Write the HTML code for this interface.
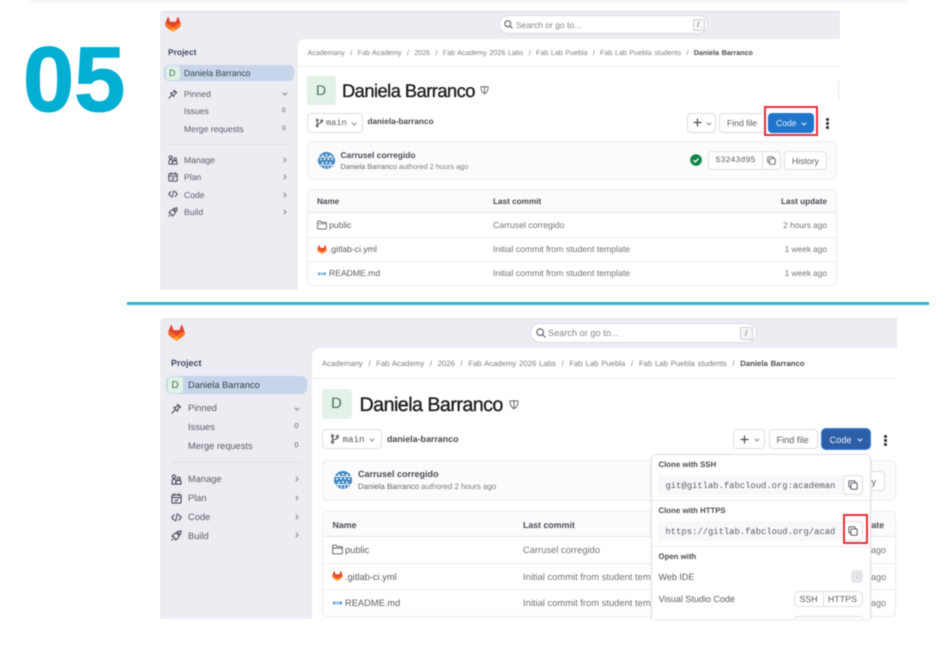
<!DOCTYPE html>
<html><head><meta charset="utf-8"><style>
html,body{margin:0;padding:0;background:#fff}
body{width:942px;height:653px;overflow:hidden;position:relative;font-family:"Liberation Sans",sans-serif;text-rendering:geometricPrecision}
.a{position:absolute;box-sizing:border-box}
.t{position:absolute;line-height:0;white-space:nowrap;color:#5c5c65}
.b{font-weight:bold;color:#4a4a52}
.m{font-family:"Liberation Mono",monospace}
svg.i{position:absolute;overflow:visible;fill:none;stroke:#4a4a54;stroke-width:1.2;stroke-linecap:round;stroke-linejoin:round}
svg.c{stroke:#85858e;stroke-width:.9}
.wrap{position:absolute;left:0;top:0;width:942px;height:653px;filter:blur(.42px)}
.btn{position:absolute;box-sizing:border-box;background:#fff;border:1px solid #dfdfe3;border-radius:4px}
</style></head><body>
<svg width="0" height="0" style="position:absolute">
<defs>
<symbol id="tan" viewBox="0 0 25 24"><path fill="#e24329" d="M24.5 9.5 21.1.6a.88.88 0 0 0-1.67.1l-2.27 6.96H7.85L5.58.7A.88.88 0 0 0 3.9.6L.53 9.4a6.25 6.25 0 0 0 2.07 7.22l5 3.75 4.3 3.02a1 1 0 0 0 1.2 0l4.3-3.02 5.04-3.77A6.25 6.25 0 0 0 24.5 9.5z"/><path fill="#fc6d26" d="M24.5 9.5c-2.6.5-5 1.6-7 3.2l-5 3.8 4.9 3.9 5-3.8a6.25 6.25 0 0 0 2.1-7.1z"/><path fill="#fc6d26" d="M.5 9.5c2.6.5 5 1.6 7 3.2l5 3.8-4.9 3.9-5-3.8A6.25 6.25 0 0 1 .5 9.5z"/><path fill="#fca326" d="M7.6 20.4l4.3 3.2a1 1 0 0 0 1.2 0l4.3-3.2-4.9-3.9z"/></symbol>
<symbol id="copy" viewBox="0 0 12 12"><path d="M3 8.500H2a1 1 0 0 1-1-1V2a1 1 0 0 1 1-1h5.500a1 1 0 0 1 1 1v1"/><rect x="3.500" y="3.500" width="7.500" height="7.500" rx="1"/></symbol>
<symbol id="pin" viewBox="0 0 12 12"><path d="M1 11l3.500-3.500M3 5l4 4 .6-2.600L10 4 8 2 5.600 4.400z"/><path d="M7 1.500l3.500 3.500"/></symbol>
<symbol id="manage" viewBox="0 0 12 12"><circle cx="3.200" cy="2.800" r="1.800"/><circle cx="8.500" cy="5" r="1.600"/><path d="M1.200 11V7.500a2 2 0 0 1 2-2 2 2 0 0 1 2 2V11zM5.500 11V8.500a1.500 1.500 0 0 1 1.500-1.300h2.500A1.500 1.500 0 0 1 11 8.700V11z"/></symbol>
<symbol id="plan" viewBox="0 0 12 12"><rect x="1" y="2" width="10" height="9" rx="1"/><path d="M1 5h10M3.500 .8v2.200M8.500 .8v2.200M4.500 8l1 1 2-2"/></symbol>
<symbol id="code" viewBox="0 0 12 12"><path d="M3.500 3L.8 6l2.700 3M8.500 3l2.700 3-2.700 3M7 2L5 10"/></symbol>
<symbol id="build" viewBox="0 0 12 12"><path d="M11 1c-3 0-5 1-6.500 3L3 4.500 1 7l2 .5L4.500 9l.5 2 2.500-2L8 7.500C10 6 11 4 11 1z"/><circle cx="7.800" cy="4.200" r="1"/><path d="M1 11l1.500-1.500"/></symbol>
<symbol id="branch" viewBox="0 0 12 12"><circle cx="3" cy="2.200" r="1.300"/><circle cx="3" cy="9.800" r="1.300"/><circle cx="9" cy="3" r="1.300"/><path d="M3 3.500v5M9 4.300c0 2.200-3 2-6 3"/></symbol>
<symbol id="folder" viewBox="0 0 12 12"><path d="M.7 3V2a.7.7 0 0 1 .7-.7h3l1.200 1.500h5a.7.7 0 0 1 .7.700V10a.7.7 0 0 1-.7.700H1.400A.7.700 0 0 1 .7 10zM.7 4.500h10.600"/></symbol>
<symbol id="shield" viewBox="0 0 10 10"><path d="M1 1.500C3.500 1.200 6.500 1.200 9 1.500 9.300 5 7.500 8 5 9.300 2.500 8 .7 5 1 1.500zM5 1.300v8"/></symbol>
<symbol id="search" viewBox="0 0 12 12"><circle cx="5" cy="5" r="4"/><path d="M8 8l3 3"/></symbol>
<symbol id="avatar" viewBox="0 0 20 20"><circle cx="10" cy="10" r="9" fill="#3f86c0"/><g fill="#fff"><circle cx="6" cy="5" r="1"/><circle cx="10" cy="4" r="1"/><circle cx="14" cy="5" r="1"/><circle cx="4" cy="9" r="1"/><circle cx="8" cy="8.500" r="1"/><circle cx="12" cy="8.500" r="1"/><circle cx="16" cy="9" r="1"/><circle cx="6" cy="12.500" r="1"/><circle cx="10" cy="12" r="1"/><circle cx="14" cy="12.500" r="1"/></g><path d="M0 6.500h20M0 14.500h20M5 15v5M8.300 15v5M11.700 15v5M15 15v5" stroke="#fff" stroke-width=".9"/></symbol>
<symbol id="md" viewBox="0 0 9 4"><path d="M0 .5h2.500v3H0zM3.500 .5h1.500v3H3.500zM6 .5h3v3H6z" fill="#5aa0e0"/></symbol>
</defs></svg>

<div class="wrap">
<div class="a" style="left:30px;top:0;width:880px;height:4px;background:linear-gradient(#f4f4f6,#fff)"></div>

<div class="t" style="left:23px;top:79.500px;font-size:92px;font-weight:bold;color:#02aed2;-webkit-text-stroke:1.200px #02aed2">05</div>
<div class="a" style="left:127px;top:302px;width:802px;height:3px;background:#2bb3cd"></div>

<!-- PANEL 1 -->
<div class="a" style="left:160px;top:11px;width:680px;height:279px;background:#ececf3;border-top:1px solid #dcdce4;border-radius:3px 0 0 0"></div>
<div class="a" style="left:298px;top:39px;width:542px;height:251px;background:#fff;border-radius:7px 0 0 0"></div>
<svg class="a" style="left:165px;top:17px" width="16" height="15"><use href="#tan"/></svg>
<div class="a" style="left:499px;top:15px;width:209px;height:19px;background:#fff;border:1px solid #dcdce2;border-radius:9px"></div>
<svg class="i" style="left:504px;top:20px" width="9" height="9"><use href="#search"/></svg>
<div class="t" style="left:516px;top:25px;font-size:8.500px;color:#85858d">Search or go to...</div>
<div class="a" style="left:693px;top:19px;width:12px;height:12px;border:1px solid #d0d0d6;border-radius:2px;background:#f6f6f8"></div>
<div class="t" style="left:697px;top:25px;font-size:8px;color:#666">/</div>

<div class="t b" style="left:168px;top:51.500px;font-size:8.400px;color:#3d4a60">Project</div>
<div class="a" style="left:164px;top:65px;width:130px;height:16px;background:#c6d5e9;border-radius:5px"></div>
<div class="a" style="left:166px;top:66px;width:14px;height:14px;background:#e0f2e4;border-radius:3px"></div>
<div class="t" style="left:169px;top:73px;font-size:9px;color:#3e6a50">D</div>
<div class="t" style="left:184px;top:73px;font-size:8.600px;color:#34404f">Daniela Barranco</div>

<svg class="i" style="left:168px;top:89px" width="10" height="10"><use href="#pin"/></svg>
<div class="t" style="left:184px;top:94px;font-size:8.600px">Pinned</div>
<svg class="i c" style="left:282px;top:92px" width="6" height="4"><path d="M1 1l2 2 2-2"/></svg>
<div class="t" style="left:184px;top:111px;font-size:8.600px">Issues</div>
<div class="t" style="left:282px;top:111px;font-size:6.500px">0</div>
<div class="t" style="left:184px;top:129px;font-size:8.600px">Merge requests</div>
<div class="t" style="left:282px;top:129px;font-size:6.500px">0</div>
<div class="a" style="left:168px;top:144px;width:121px;height:1px;background:#dcdce6"></div>
<svg class="i" style="left:168px;top:155px" width="10" height="10"><use href="#manage"/></svg>
<div class="t" style="left:184px;top:159.500px;font-size:8.600px">Manage</div>
<svg class="i" style="left:168px;top:172px" width="10" height="10"><use href="#plan"/></svg>
<div class="t" style="left:184px;top:177px;font-size:8.600px">Plan</div>
<svg class="i" style="left:168px;top:189px" width="10" height="10"><use href="#code"/></svg>
<div class="t" style="left:184px;top:194.500px;font-size:8.600px">Code</div>
<svg class="i" style="left:168px;top:207px" width="10" height="10"><use href="#build"/></svg>
<div class="t" style="left:184px;top:211.500px;font-size:8.600px">Build</div>
<svg class="i c" style="left:283px;top:157px" width="4" height="6"><path d="M1 1l2 2-2 2"/></svg>
<svg class="i c" style="left:283px;top:174px" width="4" height="6"><path d="M1 1l2 2-2 2"/></svg>
<svg class="i c" style="left:283px;top:192px" width="4" height="6"><path d="M1 1l2 2-2 2"/></svg>
<svg class="i c" style="left:283px;top:209px" width="4" height="6"><path d="M1 1l2 2-2 2"/></svg>

<div class="t" style="left:307.500px;top:53px;font-size:7.100px;color:#7c7c84;word-spacing:.7px">Academany&nbsp; /&nbsp; Fab Academy&nbsp; /&nbsp; 2026&nbsp; /&nbsp; Fab Academy 2026 Labs&nbsp; /&nbsp; Fab Lab Puebla&nbsp; /&nbsp; Fab Lab Puebla students&nbsp; /&nbsp; <b style="color:#4a4a52">Daniela Barranco</b></div>
<div class="a" style="left:298px;top:66px;width:542px;height:1px;background:#ececef"></div>
<div class="a" style="left:307px;top:76px;width:29px;height:29px;background:#e2f2e7;border-radius:3px"></div>
<div class="t" style="left:316px;top:90px;font-size:14px;color:#4a6e58">D</div>
<div class="t" style="left:342px;top:90.500px;font-size:18.300px;letter-spacing:-.52px;color:#1c1c20;-webkit-text-stroke:.35px #1c1c20">Daniela Barranco</div>
<svg class="i" style="left:480px;top:85px;stroke:#66666e;stroke-width:1" width="9" height="10"><use href="#shield"/></svg>
<div class="a" style="left:838px;top:82px;width:2px;height:16px;border:1px solid #e4e4e8;border-right:0"></div>

<div class="btn" style="left:307px;top:113px;width:56px;height:20px"></div>
<svg class="i" style="left:315px;top:118px" width="9" height="10"><use href="#branch"/></svg>
<div class="t m" style="left:326px;top:123px;font-size:8.600px;color:#5c5c65">main</div>
<svg class="i c" style="left:351px;top:122px" width="6" height="4"><path d="M1 1l2 2 2-2"/></svg>
<div class="t b" style="left:367.500px;top:122px;font-size:8.200px">daniela-barranco</div>

<div class="btn" style="left:687px;top:113px;width:29px;height:20px"></div>
<svg class="i" style="left:693px;top:118px" width="9" height="9"><path d="M4.500 1v7M1 4.500h7"/></svg>
<svg class="i c" style="left:706px;top:122px" width="6" height="4"><path d="M1 1l2 2 2-2"/></svg>
<div class="btn" style="left:719px;top:113px;width:47px;height:20px"></div>
<div class="t" style="left:727px;top:123px;font-size:8.600px">Find file</div>
<div class="a" style="left:768px;top:113px;width:46px;height:19.500px;background:#1f75cb;border-radius:4px"></div>
<div class="t" style="left:776px;top:123px;font-size:8.600px;color:#e8f2fc">Code</div>
<svg class="i" style="left:801px;top:122px;stroke:#e8f2fc;stroke-width:.9" width="6" height="4"><path d="M1 1l2 2 2-2"/></svg>
<div class="a" style="left:764px;top:106px;width:53.500px;height:29.500px;border:2px solid #e5303a"></div>
<div class="a" style="left:826px;top:118px;width:2.500px;height:2.500px;background:#333;border-radius:50%;box-shadow:0 4px 0 #333,0 8px 0 #333"></div>

<div class="a" style="left:307px;top:141px;width:530px;height:39px;background:#fbfbfc;border:1px solid #ececef;border-radius:5px"></div>
<svg class="a" style="left:317px;top:151px" width="19" height="19"><use href="#avatar"/></svg>
<div class="t b" style="left:340.500px;top:155px;font-size:8.400px">Carrusel corregido</div>
<div class="t" style="left:340.500px;top:166.500px;font-size:7.300px;color:#7c7c84"><span style="color:#666">Daniela Barranco</span> authored 2 hours ago</div>
<svg class="a" style="left:690px;top:154px" width="12" height="12"><circle cx="6" cy="6" r="5.800" fill="#108548"/><path d="M3.500 6.200l1.800 1.700 3.200-3.300" fill="none" stroke="#fff" stroke-width="1.300"/></svg>
<div class="btn" style="left:708px;top:151px;width:73px;height:19px"></div>
<div class="a" style="left:762px;top:151px;width:1px;height:19px;background:#dfdfe3"></div>
<div class="t m" style="left:715.500px;top:161px;font-size:8.300px;color:#5c5c65">53243d95</div>
<svg class="i" style="left:767px;top:156px;stroke-width:1.100" width="9" height="9"><use href="#copy"/></svg>
<div class="btn" style="left:784px;top:151px;width:43px;height:19px"></div>
<div class="t" style="left:792px;top:161px;font-size:8.600px">History</div>

<div class="a" style="left:307px;top:189px;width:530px;height:97px;background:#fff;border:1px solid #ececef;border-radius:5px"></div>
<div class="a" style="left:308px;top:190px;width:528px;height:23px;background:#fbfbfc;border-bottom:1px solid #e6e6ea;border-radius:5px 5px 0 0"></div>
<div class="a" style="left:308px;top:237px;width:528px;height:1px;background:#ececef"></div>
<div class="a" style="left:308px;top:261px;width:528px;height:1px;background:#ececef"></div>
<div class="t b" style="left:317px;top:201.500px;font-size:8.200px">Name</div>
<div class="t b" style="left:493px;top:201.500px;font-size:8.200px">Last commit</div>
<div class="t b" style="right:115px;top:201.500px;font-size:8.200px">Last update</div>
<svg class="i" style="left:317px;top:220px;stroke-width:1;stroke:#5c5c65" width="10" height="10"><use href="#folder"/></svg>
<div class="t" style="left:329px;top:225px;font-size:8.600px">public</div>
<svg class="a" style="left:317px;top:245px" width="10" height="9"><use href="#tan"/></svg>
<div class="t" style="left:329px;top:249px;font-size:8.600px">.gitlab-ci.yml</div>
<svg class="a" style="left:317.500px;top:271.500px" width="8" height="3.500"><use href="#md"/></svg>
<div class="t" style="left:329px;top:273px;font-size:8.600px">README.md</div>
<div class="t" style="left:493px;top:225px;font-size:8.700px;color:#74747c">Carrusel corregido</div>
<div class="t" style="left:493px;top:249px;font-size:8.700px;color:#74747c">Initial commit from student template</div>
<div class="t" style="left:493px;top:273px;font-size:8.700px;color:#74747c">Initial commit from student template</div>
<div class="t" style="right:115px;top:225px;font-size:8.300px;color:#74747c">2 hours ago</div>
<div class="t" style="right:115px;top:249px;font-size:8.300px;color:#74747c">1 week ago</div>
<div class="t" style="right:115px;top:273px;font-size:8.300px;color:#74747c">1 week ago</div>

<!-- PANEL 2 -->
<div class="a" style="left:160px;top:318px;width:737px;height:301px;background:#ececf3;border-top:1px solid #e2e2ea;border-radius:5px 0 0 0"></div>
<div class="a" style="left:312px;top:348px;width:585px;height:271px;background:#fff;border-radius:8px 0 0 0"></div>
<svg class="a" style="left:167.500px;top:325px" width="17" height="16"><use href="#tan"/></svg>
<div class="a" style="left:530px;top:323px;width:227px;height:20px;background:#fff;border:1px solid #dcdce2;border-radius:10px"></div>
<svg class="i" style="left:535.500px;top:328px" width="10" height="10"><use href="#search"/></svg>
<div class="t" style="left:548px;top:333px;font-size:9.200px;color:#85858d">Search or go to...</div>
<div class="a" style="left:740px;top:327px;width:13px;height:13px;border:1px solid #d0d0d6;border-radius:2px;background:#f6f6f8"></div>
<div class="t" style="left:745px;top:333px;font-size:8.500px;color:#666">/</div>

<div class="t b" style="left:171px;top:362.500px;font-size:9px;color:#3d4a60">Project</div>
<div class="a" style="left:166px;top:376px;width:141px;height:18px;background:#c6d5e9;border-radius:6px"></div>
<div class="a" style="left:168px;top:377px;width:15px;height:16px;background:#e0f2e4;border-radius:3px"></div>
<div class="t" style="left:171.500px;top:385.500px;font-size:10px;color:#3e6a50">D</div>
<div class="t" style="left:188px;top:385px;font-size:9.300px;color:#34404f">Daniela Barranco</div>

<svg class="i" style="left:171px;top:403px" width="11" height="11"><use href="#pin"/></svg>
<div class="t" style="left:188px;top:408px;font-size:9.300px">Pinned</div>
<svg class="i c" style="left:294px;top:407px" width="6" height="4"><path d="M1 1l2 2 2-2"/></svg>
<div class="t" style="left:188px;top:427px;font-size:9.300px">Issues</div>
<div class="t" style="left:294.500px;top:427px;font-size:7px">0</div>
<div class="t" style="left:188px;top:446px;font-size:9.300px">Merge requests</div>
<div class="t" style="left:294.500px;top:446px;font-size:7px">0</div>
<div class="a" style="left:171px;top:462px;width:131px;height:1px;background:#dcdce6"></div>
<svg class="i" style="left:171px;top:474px" width="11" height="11"><use href="#manage"/></svg>
<div class="t" style="left:188px;top:479px;font-size:9.300px">Manage</div>
<svg class="i" style="left:171px;top:493px" width="11" height="11"><use href="#plan"/></svg>
<div class="t" style="left:188px;top:498px;font-size:9.300px">Plan</div>
<svg class="i" style="left:171px;top:512px" width="11" height="11"><use href="#code"/></svg>
<div class="t" style="left:188px;top:517px;font-size:9.300px">Code</div>
<svg class="i" style="left:171px;top:530px" width="11" height="11"><use href="#build"/></svg>
<div class="t" style="left:188px;top:535.500px;font-size:9.300px">Build</div>
<svg class="i c" style="left:295px;top:476px" width="4" height="6"><path d="M1 1l2 2-2 2"/></svg>
<svg class="i c" style="left:295px;top:495px" width="4" height="6"><path d="M1 1l2 2-2 2"/></svg>
<svg class="i c" style="left:295px;top:514px" width="4" height="6"><path d="M1 1l2 2-2 2"/></svg>
<svg class="i c" style="left:295px;top:532px" width="4" height="6"><path d="M1 1l2 2-2 2"/></svg>

<div class="t" style="left:322px;top:364px;font-size:7.720px;color:#7c7c84;word-spacing:.7px">Academany&nbsp; /&nbsp; Fab Academy&nbsp; /&nbsp; 2026&nbsp; /&nbsp; Fab Academy 2026 Labs&nbsp; /&nbsp; Fab Lab Puebla&nbsp; /&nbsp; Fab Lab Puebla students&nbsp; /&nbsp; <b style="color:#4a4a52">Daniela Barranco</b></div>
<div class="a" style="left:312px;top:378px;width:585px;height:1px;background:#ececef"></div>
<div class="a" style="left:322px;top:389px;width:30px;height:30px;background:#e2f2e7;border-radius:3px"></div>
<div class="t" style="left:331px;top:404px;font-size:15px;color:#4a6e58">D</div>
<div class="t" style="left:359.500px;top:404.500px;font-size:19.700px;letter-spacing:-.55px;color:#1c1c20;-webkit-text-stroke:.35px #1c1c20">Daniela Barranco</div>
<svg class="i" style="left:509px;top:399px;stroke:#66666e;stroke-width:1" width="10" height="11"><use href="#shield"/></svg>

<div class="btn" style="left:322px;top:429px;width:60px;height:20px"></div>
<svg class="i" style="left:330px;top:434px" width="10" height="10"><use href="#branch"/></svg>
<div class="t m" style="left:342.500px;top:439.500px;font-size:9.200px;color:#5c5c65">main</div>
<svg class="i c" style="left:369px;top:438px" width="6" height="4"><path d="M1 1l2 2 2-2"/></svg>
<div class="t b" style="left:387px;top:438.500px;font-size:8.900px">daniela-barranco</div>

<div class="btn" style="left:733px;top:429px;width:32px;height:20px"></div>
<svg class="i" style="left:740px;top:435px" width="9" height="9"><path d="M4.500 1v7M1 4.500h7"/></svg>
<svg class="i c" style="left:754px;top:438px" width="6" height="4"><path d="M1 1l2 2 2-2"/></svg>
<div class="btn" style="left:769px;top:429px;width:49px;height:20px"></div>
<div class="t" style="left:776.500px;top:439.500px;font-size:9.200px">Find file</div>
<div class="a" style="left:821px;top:428px;width:50px;height:22px;background:#2c5fa8;border:1.500px solid #3c7fd0;border-radius:5px"></div>
<div class="t" style="left:829.500px;top:439.500px;font-size:9.200px;color:#e8f2fc">Code</div>
<svg class="i" style="left:857px;top:438px;stroke:#e8f2fc;stroke-width:.9" width="6" height="4"><path d="M1 1l2 2 2-2"/></svg>
<div class="a" style="left:884px;top:435px;width:2.500px;height:2.500px;background:#333;border-radius:50%;box-shadow:0 4px 0 #333,0 8px 0 #333"></div>

<div class="a" style="left:322px;top:460px;width:574px;height:41px;background:#fbfbfc;border:1px solid #ececef;border-radius:5px"></div>
<svg class="a" style="left:332.500px;top:470px" width="20" height="20"><use href="#avatar"/></svg>
<div class="t b" style="left:358px;top:474px;font-size:9px">Carrusel corregido</div>
<div class="t" style="left:358px;top:486.500px;font-size:7.900px;color:#7c7c84"><span style="color:#666">Daniela Barranco</span> authored 2 hours ago</div>
<div class="btn" style="left:840px;top:471px;width:45px;height:20px"></div>
<div class="t" style="left:847.500px;top:481.500px;font-size:9.200px">History</div>

<div class="a" style="left:322px;top:511px;width:574px;height:106px;background:#fff;border:1px solid #ececef;border-radius:5px"></div>
<div class="a" style="left:323px;top:512px;width:572px;height:25px;background:#fbfbfc;border-bottom:1px solid #e6e6ea;border-radius:5px 5px 0 0"></div>
<div class="a" style="left:323px;top:563px;width:572px;height:1px;background:#ececef"></div>
<div class="a" style="left:323px;top:589px;width:572px;height:1px;background:#ececef"></div>
<div class="t b" style="left:332.500px;top:524.500px;font-size:8.800px">Name</div>
<div class="t b" style="left:523px;top:524.500px;font-size:8.800px">Last commit</div>
<div class="t b" style="left:866px;top:524.500px;font-size:8.800px">date</div>
<svg class="i" style="left:332px;top:544px;stroke-width:1;stroke:#5c5c65" width="11" height="11"><use href="#folder"/></svg>
<div class="t" style="left:345px;top:550px;font-size:9.300px">public</div>
<svg class="a" style="left:332px;top:571px" width="11" height="10"><use href="#tan"/></svg>
<div class="t" style="left:345px;top:576.500px;font-size:9.300px">.gitlab-ci.yml</div>
<svg class="a" style="left:332.500px;top:600.500px" width="9" height="4"><use href="#md"/></svg>
<div class="t" style="left:345px;top:602.500px;font-size:9.300px">README.md</div>
<div class="t" style="left:523px;top:550px;font-size:9.400px;color:#74747c">Carrusel corregido</div>
<div class="t" style="left:523px;top:576.500px;font-size:9.400px;color:#74747c">Initial commit from student template</div>
<div class="t" style="left:523px;top:602.500px;font-size:9.400px;color:#74747c">Initial commit from student template</div>
<div class="t" style="left:871px;top:550px;font-size:9px;color:#74747c">ago</div>
<div class="t" style="left:871px;top:576.500px;font-size:9px;color:#74747c">ago</div>
<div class="t" style="left:871px;top:602.500px;font-size:9px;color:#74747c">ago</div>

<!-- dropdown -->
<div class="a" style="left:651px;top:454px;width:220px;height:165px;background:#fff;border:1px solid #e0e0e4;border-bottom:0;border-radius:5px 5px 0 0;box-shadow:0 1px 3px rgba(0,0,0,.08)"></div>
<div class="t b" style="left:658.500px;top:464.500px;font-size:7.800px">Clone with SSH</div>
<div class="a" style="left:658px;top:475px;width:186px;height:20px;background:#f8f8fa;border-radius:3px"></div>
<div class="t m" style="left:665.500px;top:485.500px;font-size:8.850px;color:#5c5c65">git@gitlab.fabcloud.org:academan</div>
<div class="btn" style="left:843px;top:475px;width:20px;height:20px"></div>
<svg class="i" style="left:848px;top:480px;stroke-width:1.100" width="10" height="10"><use href="#copy"/></svg>
<div class="a" style="left:652px;top:500px;width:218px;height:1px;background:#ececef"></div>
<div class="t b" style="left:658.500px;top:510.500px;font-size:7.800px">Clone with HTTPS</div>
<div class="a" style="left:658px;top:521px;width:186px;height:20px;background:#f8f8fa;border-radius:3px"></div>
<div class="t m" style="left:665.500px;top:531.500px;font-size:8.850px;color:#5c5c65">https://gitlab.fabcloud.org/acad</div>
<div class="btn" style="left:843px;top:521px;width:20px;height:20px"></div>
<svg class="i" style="left:848px;top:526px;stroke-width:1.100" width="10" height="10"><use href="#copy"/></svg>
<div class="a" style="left:843px;top:514px;width:25px;height:29.500px;border:2px solid #e5303a"></div>
<div class="a" style="left:652px;top:546px;width:218px;height:1px;background:#ececef"></div>
<div class="t b" style="left:658.500px;top:556.500px;font-size:7.800px">Open with</div>
<div class="t" style="left:658.500px;top:576.500px;font-size:9px">Web IDE</div>
<div class="a" style="left:851px;top:569.500px;width:12px;height:13px;background:#e6e6ea;border-radius:3px"></div>
<div class="t" style="left:856px;top:576px;font-size:8px">.</div>
<div class="t" style="left:658.500px;top:598.500px;font-size:9px">Visual Studio Code</div>
<div class="btn" style="left:794px;top:591px;width:69px;height:16px;border-radius:5px"></div>
<div class="a" style="left:822.500px;top:591px;width:1px;height:16px;background:#dfdfe3"></div>
<div class="t" style="left:799.500px;top:599px;font-size:8.800px">SSH</div>
<div class="t" style="left:828px;top:599px;font-size:8.800px">HTTPS</div>
<div class="a" style="left:794px;top:616px;width:69px;height:3px;border:1px solid #dfdfe3;border-bottom:0;border-radius:5px 5px 0 0"></div>
</div>
</body></html>
